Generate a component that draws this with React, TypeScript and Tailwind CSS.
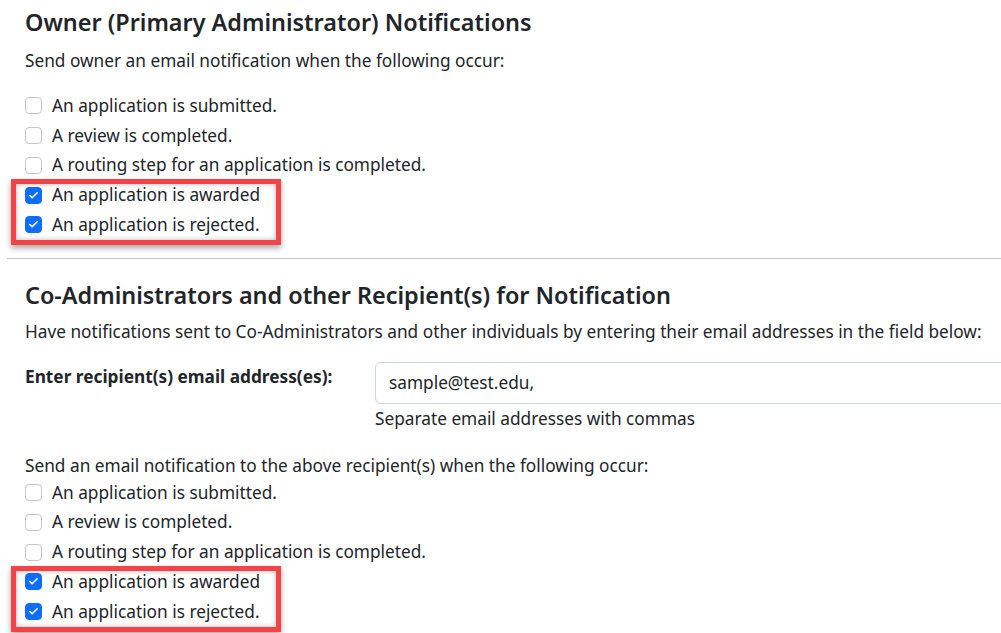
import { Check } from 'lucide-react';

const font = { fontFamily: '"Noto Sans", "Open Sans", sans-serif' };

const ownerItems = [
  { label: 'An application is submitted.', checked: false },
  { label: 'A review is completed.', checked: false },
  { label: 'A routing step for an application is completed.', checked: false },
  { label: 'An application is awarded', checked: true },
  { label: 'An application is rejected.', checked: true },
];

function CheckRow({ label, checked }: { label: string; checked: boolean }) {
  return (
    <div className="flex items-center h-[29.75px]">
      <span
        className={
          checked
            ? 'w-[17px] h-[17px] rounded-[4px] bg-[#0d6efd] border border-[#0d6efd] flex items-center justify-center'
            : 'w-[17px] h-[17px] rounded-[4px] bg-white border border-[#c4c7ca]'
        }
      >
        {checked && <Check className="w-[11px] h-[11px] text-white" strokeWidth={3.5} />}
      </span>
      <span className="ml-[10px] text-[17.25px] text-[#212529]">{label}</span>
    </div>
  );
}

function CheckList() {
  return (
    <div className="relative">
      {ownerItems.map((it) => (
        <CheckRow key={it.label} label={it.label} checked={it.checked} />
      ))}
      {/* highlight around the checked rows */}
      <div className="absolute left-[-14px] top-[88px] w-[270px] h-[66px] border-[5px] border-[#f24349] shadow-[0_3px_6px_rgba(0,0,0,0.35),inset_0_0_5px_rgba(0,0,0,0.3)] pointer-events-none" />
    </div>
  );
}

export default function App() {
  return (
    <div className="w-[1001px] h-[633px] overflow-hidden bg-white text-[#212529]" style={font}>
      <div className="px-[25px]">
        <h4 className="pt-[5px] h-[39px] text-[23.4px] leading-[34px] font-semibold">
          Owner (Primary Administrator) Notifications
        </h4>
        <p className="mt-[8px] text-[17.25px] leading-[27px]">Send owner an email notification when the following occur:</p>
        <div className="mt-[17px]">
          <CheckList />
        </div>
      </div>

      <hr className="ml-[7px] mt-[18px] border-t border-[#c9c9c9]" />

      <div className="px-[25px]">
        <h4 className="mt-[19px] h-[34px] text-[23.4px] leading-[34px] font-semibold">
          Co-Administrators and other Recipient(s) for Notification
        </h4>
        <p className="mt-[6.5px] text-[17.25px] leading-[27px] whitespace-nowrap">
          Have notifications sent to Co-Administrators and other individuals by entering their email addresses in the field below:
        </p>
        <div className="flex mt-[16.5px]">
          <label className="w-[350px] shrink-0 pt-[3px] text-[17.25px] leading-[24px] font-bold">
            Enter recipient(s) email address(es):
          </label>
          <div className="shrink-0">
            <div className="w-[660px] h-[42px] border border-[#ced4da] rounded-[6px] flex items-center px-[13px] text-[17.25px]">
              sample@test.edu,
            </div>
            <div className="h-[30px] flex items-center text-[17.25px]">Separate email addresses with commas</div>
          </div>
        </div>
        <p className="mt-[18.5px] text-[17.25px] leading-[27px] whitespace-nowrap">
          Send an email notification to the above recipient(s) when the following occur:
        </p>
        <div className="-mt-[1.5px]">
          <CheckList />
        </div>
      </div>
    </div>
  );
}
